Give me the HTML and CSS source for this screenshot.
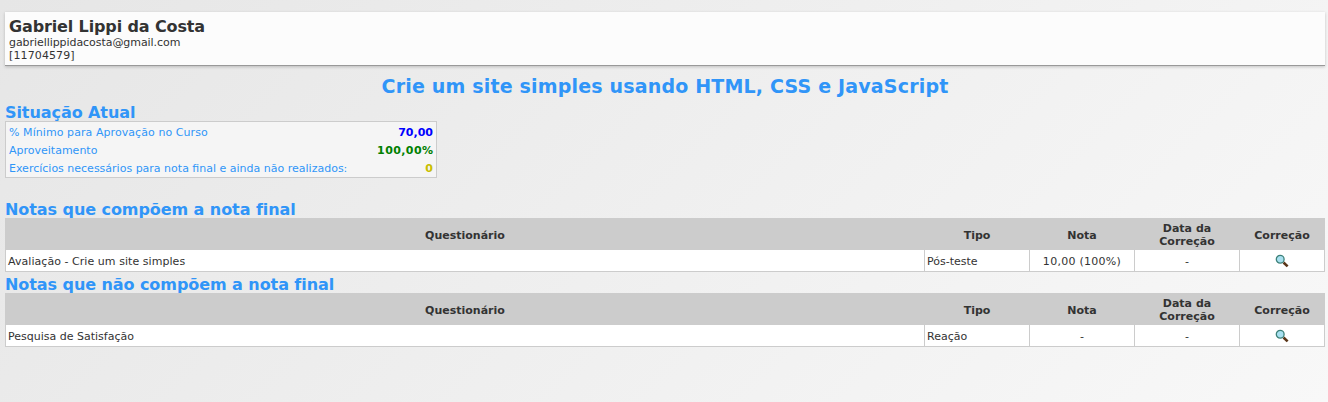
FILE: index.html
```html
<!DOCTYPE html>
<html lang="pt-BR">
<head>
<meta charset="utf-8">
<title>Notas do curso</title>
<link rel="stylesheet" href="styles.css">
</head>
<body>
<header class="student">
  <div class="student-name">Gabriel Lippi da Costa</div>
  <div class="student-mail">gabriellippidacosta@gmail.com</div>
  <div class="student-code">[11704579]</div>
</header>
<main>
  <h1 class="course">Crie um site simples usando HTML, CSS e JavaScript</h1>
  <h2 class="section">Situação Atual</h2>
  <dl class="status">
    <div class="status-row"><dt class="wide">% Mínimo para Aprovação no Curso</dt><dd class="minimum">70,00</dd></div>
    <div class="status-row"><dt>Aproveitamento</dt><dd class="score">100,00%</dd></div>
    <div class="status-row"><dt>Exercícios necessários para nota final e ainda não realizados:</dt><dd class="pending">0</dd></div>
  </dl>
  <h2 class="section">Notas que compõem a nota final</h2>
  <table class="grades">
    <colgroup><col class="c-quiz"><col class="c-mid"><col class="c-mid"><col class="c-mid"><col class="c-last"></colgroup>
    <thead><tr><th>Questionário</th><th>Tipo</th><th>Nota</th><th class="two-line">Data da<br>Correção</th><th>Correção</th></tr></thead>
    <tbody><tr><td class="quiz">Avaliação - Crie um site simples</td><td>Pós-teste</td><td class="center grade">10,00 (100%)</td><td class="center">-</td><td class="center"><svg class="lens" viewBox="0 0 14 14"><path d="M8.5 8.5L12.6 12.4" stroke="#5a3517" stroke-width="2.6"/><circle cx="5.2" cy="5.2" r="3.9" fill="#a8e0f0" stroke="#3d8078" stroke-width="1.3"/></svg></td></tr></tbody>
  </table>
  <h2 class="section second">Notas que não compõem a nota final</h2>
  <table class="grades">
    <colgroup><col class="c-quiz"><col class="c-mid"><col class="c-mid"><col class="c-mid"><col class="c-last"></colgroup>
    <thead><tr><th>Questionário</th><th>Tipo</th><th>Nota</th><th class="two-line">Data da<br>Correção</th><th>Correção</th></tr></thead>
    <tbody><tr><td>Pesquisa de Satisfação</td><td>Reação</td><td class="center">-</td><td class="center">-</td><td class="center"><svg class="lens" viewBox="0 0 14 14"><path d="M8.5 8.5L12.6 12.4" stroke="#5a3517" stroke-width="2.6"/><circle cx="5.2" cy="5.2" r="3.9" fill="#a8e0f0" stroke="#3d8078" stroke-width="1.3"/></svg></td></tr></tbody>
  </table>
</main>
</body>
</html>
```
FILE: styles.css
```css
* { box-sizing: border-box; }
html { height: 100%; background: linear-gradient(135deg, #e6e6e6, #f8f8f8); }
body {
  margin: 0;
  padding: 12px 3px 0 5px;
  font: 11px/13px Verdana, "DejaVu Sans", sans-serif;
  color: #333;
}
.student {
  height: 54px;
  padding: 5px 4px 0;
  background: #fcfcfc;
  border-bottom: 1px solid #999;
  box-shadow: 0 1px 3px rgba(0, 0, 0, .2);
}
.student-name { font-size: 16px; line-height: 19px; font-weight: bold; letter-spacing: -.13px; }
.student-mail { letter-spacing: -.06px; }
.student-code { letter-spacing: .12px; }
.course {
  margin: 8px 0 5px;
  font-size: 19px;
  line-height: 24px;
  letter-spacing: .18px;
  text-align: center;
  color: #3095f8;
}
.section {
  height: 18px;
  margin: 0;
  font-size: 16px;
  line-height: 20px;
  letter-spacing: -.07px;
  color: #3095f8;
}
.status {
  width: 432px;
  height: 57px;
  margin: 0 0 22px;
  padding: 2px 3px 0;
  border: 1px solid #ccc;
  background: #f5f5f5;
}
.status-row { display: flex; justify-content: space-between; height: 18px; line-height: 18px; }
.status dt { color: #3095f8; white-space: nowrap; }
.status .wide { letter-spacing: .07px; }
.status dd { margin: 0; font-weight: bold; }
.minimum { color: #00f; }
.score { color: #008000; letter-spacing: .4px; }
.status .score { margin-right: -.4px; }
.pending { color: #c8be00; }
.grades { width: 1320px; table-layout: fixed; border-collapse: collapse; background: #fff; }
.grades th { height: 31px; padding: 2px 0 0; background: #ccc; border: 1px solid #ccc; }
.grades .two-line { padding-top: 1px; }
.grades td { height: 22px; padding: 2px 2px 0; border: 1px solid #ccc; }
.grades .center { text-align: center; }
.quiz { letter-spacing: .05px; }
.grade { letter-spacing: .27px; }
.c-quiz { width: 919px; }
.c-mid { width: 105px; }
.c-last { width: 85px; }
.second { height: 21px; padding-top: 3px; }
.lens { display: block; width: 14px; height: 14px; margin: -2px auto 0; }
```
